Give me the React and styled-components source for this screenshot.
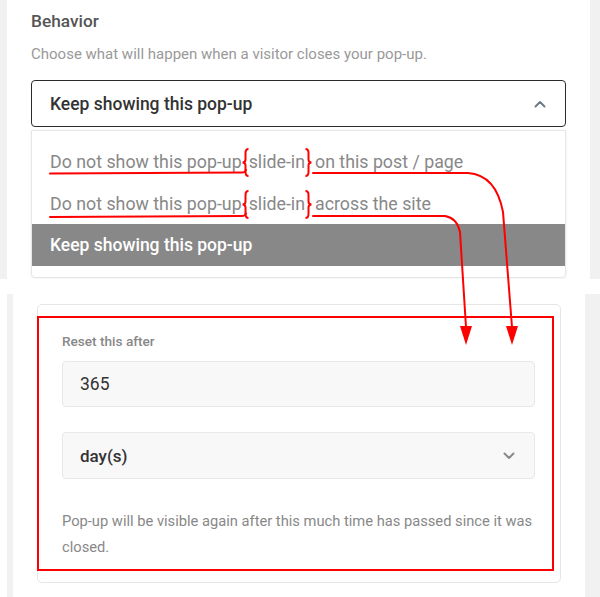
import styled, { createGlobalStyle } from 'styled-components';

const GlobalStyle = createGlobalStyle`
    * { box-sizing: border-box; }
    body {
        margin: 0;
        background: #ffffff;
        font-family: Roboto, "Liberation Sans", Arial, sans-serif;
    }
`

const Page = styled.div`
    position: relative;
    width: 600px;
    height: 597px;
    overflow: hidden;
    background: #ffffff;
`
const TopShot = styled.div`
    display: flex;
    height: 279px;
    background: #f1f1f1;
    padding: 0 10px 0 7px;
`
const Panel = styled.div`
    flex: 1;
    background: #ffffff;
    padding: 11px 24px 0;
    overflow: hidden;
`
const Heading = styled.h3`
    margin: 0;
    font-size: 17.3px;
    line-height: 21px;
    font-weight: 500;
    color: #555555;
`
const Description = styled.p`
    margin: 12px 0 0;
    font-size: 15px;
    line-height: 21px;
    color: #999999;
`
const SelectBox = styled.div`
    display: flex;
    align-items: center;
    justify-content: space-between;
    height: ${(props) => props.$height || 47}px;
    margin-top: ${(props) => props.$top || 0}px;
    padding: 0 ${(props) => props.$right || 20}px 0 ${(props) => props.$left || 17}px;
    border: ${(props) => (props.$open ? '1.5px solid #2b2b2b' : '1px solid #e8e8e8')};
    border-radius: 4px;
    background: ${(props) => (props.$open ? '#ffffff' : '#f8f8f8')};
    font-size: ${(props) => props.$size || 17.5}px;
    font-weight: 500;
    color: #333333;
`
const OptionList = styled.div`
    margin-top: 3px;
    padding: 9px 0 11px;
    border: 1px solid #e6e6e6;
    border-radius: 0 0 4px 4px;
    box-shadow: 0 1px 4px rgba(0, 0, 0, 0.06);
    background: #ffffff;
`
const Option = styled.div`
    display: flex;
    align-items: center;
    height: 42px;
    padding-left: 18px;
    font-size: ${(props) => (props.$active ? 17.5 : 17.8)}px;
    white-space: nowrap;
    font-weight: ${(props) => (props.$active ? 500 : 400)};
    color: ${(props) => (props.$active ? '#ffffff' : '#888888')};
    background: ${(props) => (props.$active ? '#888888' : 'transparent')};
`
const Space = styled.span`
    display: inline-block;
    width: ${(props) => props.$w}px;
`
const BraceIcon = styled.svg`
    display: inline-block;
    flex: none;
    width: 7px;
    height: 29px;
    margin-top: 2px;
`
const BottomShot = styled.div`
    display: flex;
    height: 303px;
    margin: 15px 0 0 7px;
    border-left: 6px solid #f1f1f1;
`
const BottomPanel = styled.div`
    flex: 1;
    padding: 10px 24px 0;
    background: #ffffff;
`
const Gutter = styled.div`
    width: 15px;
    background: #f1f1f1;
`
const Card = styled.div`
    padding: 28px 25px 22px 24px;
    border: 1px solid #e6e6e6;
    border-radius: 5px;
`
const Label = styled.div`
    font-size: 13.6px;
    line-height: 16px;
    font-weight: 500;
    color: #888888;
    margin-bottom: 12px;
`
const Input = styled.div`
    display: flex;
    align-items: center;
    height: 46px;
    padding: 0 17px;
    border: 1px solid #e8e8e8;
    border-radius: 4px;
    background: #f8f8f8;
    font-size: 17.5px;
    color: #333333;
`
const Help = styled.p`
    margin: 29px -6px 0 0;
    font-size: 14.7px;
    line-height: 26px;
    color: #888888;
`
const Overlay = styled.svg`
    position: absolute;
    left: 0;
    top: 0;
    pointer-events: none;
`

const Chevron = ({ up }) => (
    <svg width="12" height="8" viewBox="0 0 12 8">
        <path
            d={up ? 'M1.5 6.5 L6 2 L10.5 6.5' : 'M1.5 1.5 L6 6 L10.5 1.5'}
            fill="none"
            stroke={up ? '#6f7a85' : '#8a8a8a'}
            strokeWidth="2"
            strokeLinecap="round"
            strokeLinejoin="round"
        />
    </svg>
);

const Brace = ({ close }) => (
    <BraceIcon viewBox="0 0 7 29">
        <path
            d={close
                ? 'M0.5 1 Q3.5 1 3.5 5 L3.5 11.5 Q3.5 14.5 6.5 14.5 Q3.5 14.5 3.5 17.5 L3.5 24 Q3.5 28 0.5 28'
                : 'M6.5 1 Q3.5 1 3.5 5 L3.5 11.5 Q3.5 14.5 0.5 14.5 Q3.5 14.5 3.5 17.5 L3.5 24 Q3.5 28 6.5 28'}
            fill="none"
            stroke="#ff0000"
            strokeWidth="2"
        />
    </BraceIcon>
);

const AnnotatedOption = ({ tail }) => (
    <Option>
        Do not show this pop-up
        <Brace />
        slide-in
        <Brace close />
        <Space $w={3} />
        {tail}
    </Option>
);

const Annotations = () => (
    <Overlay width="600" height="597" viewBox="0 0 600 597">
        <g fill="none" stroke="#ff0000" strokeWidth="2" strokeLinecap="round">
            <path d="M50 173.5 L242 172.5 Q245 172.5 246 170" />
            <path d="M50 217 L242 216 Q245 216 246 213.5" />
            <path d="M313 173 L468 173 Q496 175 503 212 L512 327" />
            <path d="M313 216 L445 216 Q457 218 460 232 L466 327" />
        </g>
        <g fill="#ff0000">
            <polygon points="506,326 518,326 512,345" />
            <polygon points="460,326 472,326 466,345" />
        </g>
        <rect x="38" y="317" width="515" height="253" fill="none" stroke="#ff0000" strokeWidth="2" />
    </Overlay>
);

const App = () => {
    return (
        <>
            <GlobalStyle />
            <Page>
                <TopShot>
                    <Panel>
                        <Heading>Behavior</Heading>
                        <Description>Choose what will happen when a visitor closes your pop-up.</Description>
                        <SelectBox $open $top={15} $right={19} $left={18}>
                            Keep showing this pop-up
                            <Chevron up />
                        </SelectBox>
                        <OptionList>
                            <AnnotatedOption tail="on this post / page" />
                            <AnnotatedOption tail="across the site" />
                            <Option $active>Keep showing this pop-up</Option>
                        </OptionList>
                    </Panel>
                </TopShot>
                <BottomShot>
                    <BottomPanel>
                        <Card>
                            <Label>Reset this after</Label>
                            <Input>365</Input>
                            <SelectBox $top={25} $left={17} $right={19} $size={17}>
                                day(s)
                                <Chevron />
                            </SelectBox>
                            <Help>Pop-up will be visible again after this much time has passed since it was closed.</Help>
                        </Card>
                    </BottomPanel>
                    <Gutter />
                </BottomShot>
                <Annotations />
            </Page>
        </>
    );
}

export default App;
